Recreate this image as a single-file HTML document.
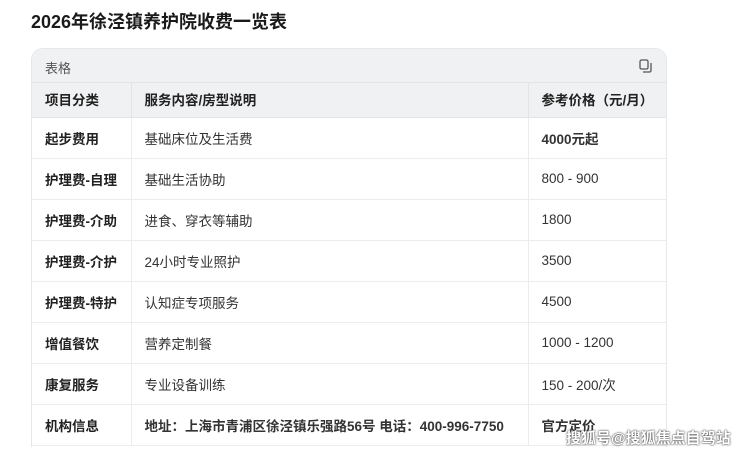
<!DOCTYPE html>
<html><head><meta charset="utf-8"><style>
*{margin:0;padding:0;box-sizing:border-box}
html,body{width:740px;height:456px;overflow:hidden}
body{background:#fff;font-family:"Liberation Sans","Noto Sans CJK SC",sans-serif;color:#222;position:relative}
h1{position:absolute;left:31px;top:8px;font-size:18px;font-weight:700;color:#1a1a1a}
.card{position:absolute;left:31px;top:48px;width:636px;height:399px;border:1px solid #e6e7ea;border-bottom:none;border-radius:12px 12px 0 0;overflow:hidden;background:#fff}
.bar{height:34px;background:#f0f1f3;font-size:13px;color:#555;padding:9px 0 0 13px;position:relative;border-bottom:1px solid #e3e4e7}
.copy{position:absolute;right:14px;top:10px;width:13px;height:14px}
table{border-collapse:collapse;width:100%;font-size:13.5px}
td{height:41px;border-bottom:1px solid #ececee;border-right:1px solid #ececee;padding:0 13px;color:#333}
td:last-child{border-right:none}
tr.h td{height:35px;background:#f0f1f3;font-weight:700;color:#222;border-color:#e3e4e7}
td:first-child{width:99px;font-weight:700;color:#222}
td:nth-child(2){width:397px}
.wm{position:absolute;left:566px;top:427px;font-size:15px;font-weight:700;color:#fff;text-shadow:0 0 2px #444,0 0 1px #444}
</style></head><body>
<h1>2026年徐泾镇养护院收费一览表</h1>
<div class="card">
<div class="bar">表格<svg class="copy" viewBox="0 0 13 14" fill="none" stroke="#555" stroke-width="1.3"><rect x="1" y="1" width="8" height="9" rx="1.5"/><path d="M4 13h6.5a1.5 1.5 0 0 0 1.5-1.5V4"/></svg></div>
<table style="margin-top:-1px">
<tr class="h"><td>项目分类</td><td>服务内容/房型说明</td><td>参考价格（元/月）</td></tr>
<tr><td>起步费用</td><td>基础床位及生活费</td><td><b>4000元起</b></td></tr>
<tr><td>护理费-自理</td><td>基础生活协助</td><td>800 - 900</td></tr>
<tr><td>护理费-介助</td><td>进食、穿衣等辅助</td><td>1800</td></tr>
<tr><td>护理费-介护</td><td>24小时专业照护</td><td>3500</td></tr>
<tr><td>护理费-特护</td><td>认知症专项服务</td><td>4500</td></tr>
<tr><td>增值餐饮</td><td>营养定制餐</td><td>1000 - 1200</td></tr>
<tr><td>康复服务</td><td>专业设备训练</td><td>150 - 200/次</td></tr>
<tr><td>机构信息</td><td><b>地址：上海市青浦区徐泾镇乐强路56号 电话：400-996-7750</b></td><td><b>官方定价</b></td></tr>
</table>
</div>
<div class="wm">搜狐号@搜狐焦点自驾站</div>
</body></html>
